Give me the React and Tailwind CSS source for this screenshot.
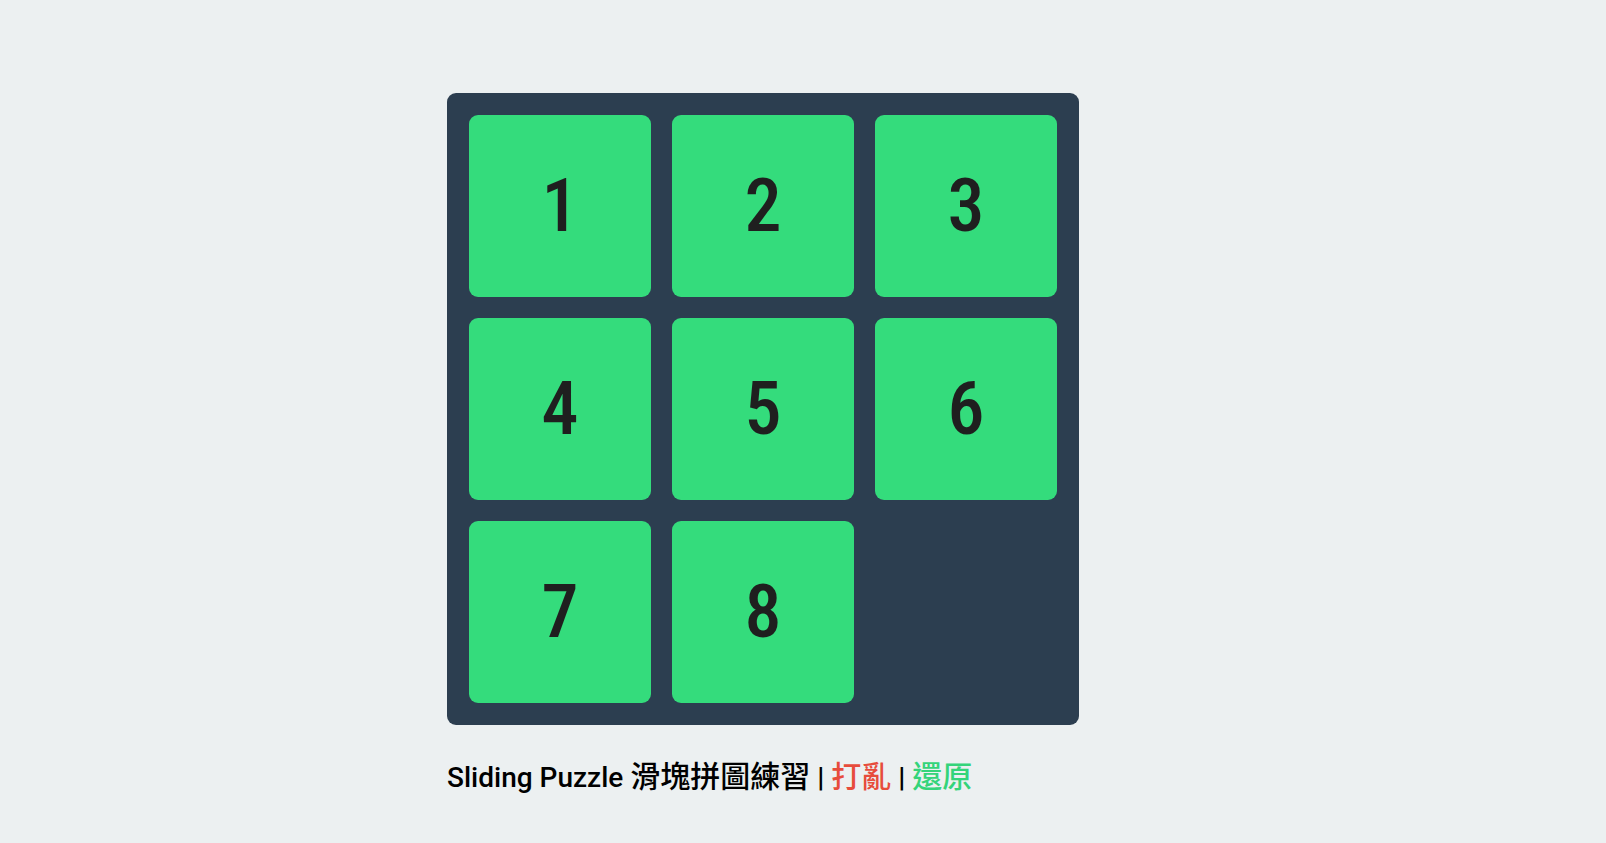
import { useState } from "react";

const SOLVED = [1, 2, 3, 4, 5, 6, 7, 8, 0];

function neighbors(i) {
  const r = Math.floor(i / 3);
  const c = i % 3;
  const list = [];
  if (r > 0) list.push(i - 3);
  if (r < 2) list.push(i + 3);
  if (c > 0) list.push(i - 1);
  if (c < 2) list.push(i + 1);
  return list;
}

export default function App() {
  const [tiles, setTiles] = useState(SOLVED);

  const move = (i) => {
    const empty = tiles.indexOf(0);
    if (!neighbors(i).includes(empty)) return;
    const next = [...tiles];
    next[empty] = next[i];
    next[i] = 0;
    setTiles(next);
  };

  // shuffle by random legal moves so the puzzle stays solvable
  const shuffle = () => {
    let next = [...tiles];
    let empty = next.indexOf(0);
    for (let n = 0; n < 200; n++) {
      const opts = neighbors(empty);
      const pick = opts[Math.floor(Math.random() * opts.length)];
      next[empty] = next[pick];
      next[pick] = 0;
      empty = pick;
    }
    setTiles(next);
  };

  return (
    <div
      className="min-h-screen w-full bg-[#ecf0f1] pt-[93px]"
      style={{ fontFamily: 'Roboto, "Noto Sans CJK TC", sans-serif' }}
    >
      <div className="mx-auto w-[712px]">
        <div className="w-[632px] rounded-[9px] bg-[#2c3e50] p-[22px]">
          <div className="grid grid-cols-[repeat(3,182px)] grid-rows-[repeat(3,182px)] gap-[21px]">
            {tiles.map((t, i) =>
              t === 0 ? (
                <div key={i} />
              ) : (
                <button
                  key={i}
                  onClick={() => move(i)}
                  className="flex items-center justify-center rounded-[9px] bg-[#34dc7c] text-[74px] font-[460] font-stretch-extra-condensed leading-none text-[#1f1f1f]"
                >
                  {t}
                </button>
              )
            )}
          </div>
        </div>
        <p className="mt-[36px] text-[28px] font-medium leading-[32px] text-black">
          Sliding Puzzle <span className="text-[30px]">滑塊拼圖練習</span>{" "}
          <span className="font-bold">|</span>{" "}
          <span onClick={shuffle} className="cursor-pointer text-[30px] text-[#e74c3c]">
            打亂
          </span>{" "}
          <span className="font-bold">|</span>{" "}
          <span onClick={() => setTiles(SOLVED)} className="cursor-pointer text-[30px] text-[#34d47a]">
            還原
          </span>
        </p>
      </div>
    </div>
  );
}
